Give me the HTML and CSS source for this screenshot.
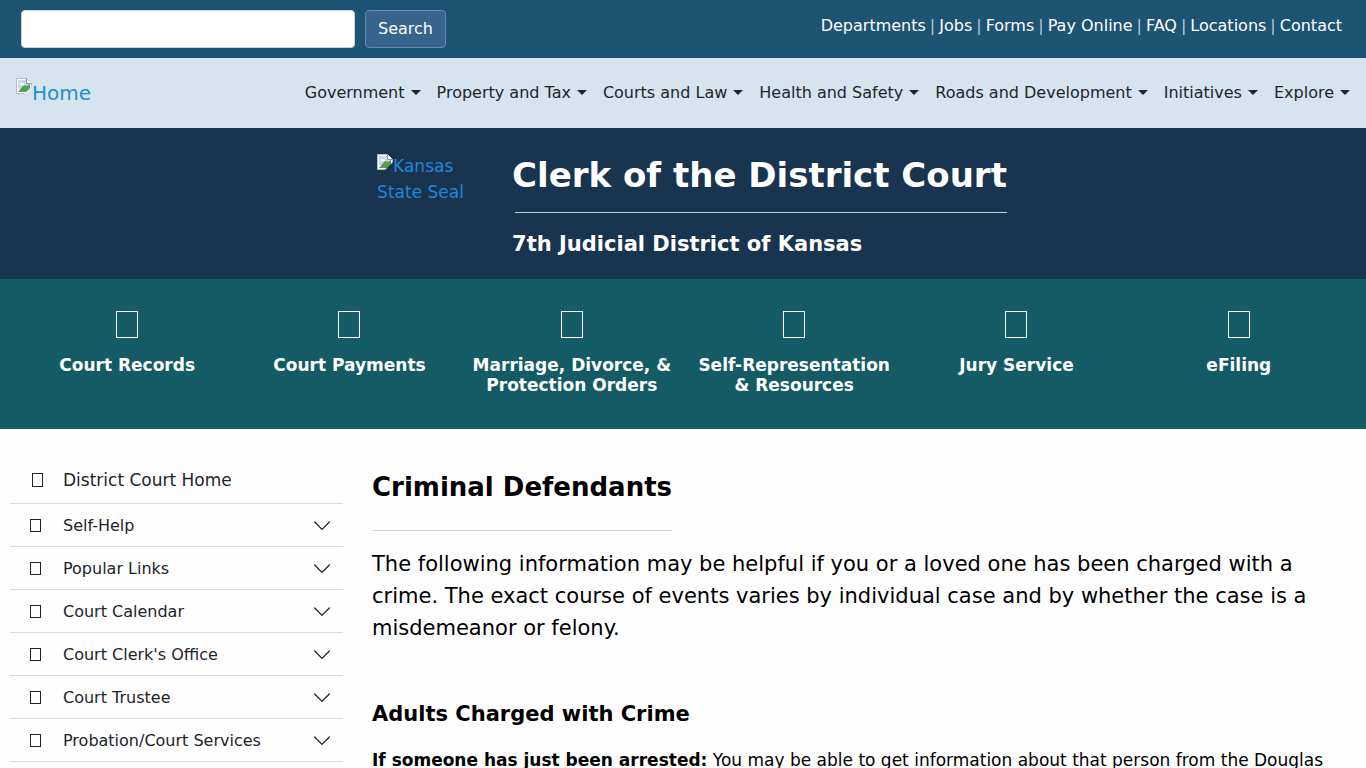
FILE: index.html
```
<!DOCTYPE html>
<html lang="en">
<head>
    <meta charset="UTF-8">
    <meta name="viewport" content="width=device-width, initial-scale=1.0">
    <title>Criminal Defendants</title>
    <link rel="stylesheet" href="styles.css">
</head>
<body>
    <svg class="defs" width="0" height="0" aria-hidden="true">
        <symbol id="missing" viewBox="0 0 16 16">
            <path d="M0.5 0.5h10l5 5v10h-15z" fill="#fff" stroke="#b9b9c4"/>
            <path d="M2 2h8v4h4v5H2z" fill="#c6d8f3"/>
            <path d="M2 14l4-5c2-2 4-2 5-1l3-2v8z" fill="#58a046"/>
            <path d="M4 7a2 1.500 0 0 1 4-1v1z" fill="#fff"/>
            <path d="M10.500 0.500v5h5" fill="#fff" stroke="#8c8c98"/>
            <path d="M16 8L8 16h8z" fill="currentColor"/>
        </symbol>
        <symbol id="chevron" viewBox="0 0 16 16">
            <path d="M1.500 4.500l6.500 6.500 6.500-6.500" fill="none" stroke="#212529" stroke-width="1.200" stroke-linecap="round" stroke-linejoin="round"/>
        </symbol>
    </svg>

    <div class="topbar">
        <form class="search">
            <input type="text" aria-label="Search">
            <button type="submit">Search</button>
        </form>
        <div class="top-links">
            <a href="#">Departments</a>
            <span>|</span>
            <a href="#">Jobs</a>
            <span>|</span>
            <a href="#">Forms</a>
            <span>|</span>
            <a href="#">Pay Online</a>
            <span>|</span>
            <a href="#">FAQ</a>
            <span>|</span>
            <a href="#">Locations</a>
            <span>|</span>
            <a href="#">Contact</a>
        </div>
    </div>

    <nav class="navbar">
        <a class="brand" href="#"><svg class="missing"><use href="#missing"/></svg>Home</a>
        <div class="menu">
            <a href="#">Government</a>
            <a href="#">Property and Tax</a>
            <a href="#">Courts and Law</a>
            <a href="#">Health and Safety</a>
            <a href="#">Roads and Development</a>
            <a href="#">Initiatives</a>
            <a href="#">Explore</a>
        </div>
    </nav>

    <header class="hero">
        <a class="seal" href="#"><svg class="missing"><use href="#missing"/></svg>Kansas State Seal</a>
        <div class="hero-text">
            <h1>Clerk of the District Court</h1>
            <hr>
            <p>7th Judicial District of Kansas</p>
        </div>
    </header>

    <div class="services">
        <a href="#"><span class="box"></span>Court Records</a>
        <a href="#"><span class="box"></span>Court Payments</a>
        <a href="#"><span class="box"></span>Marriage, Divorce, &amp; Protection Orders</a>
        <a href="#"><span class="box"></span>Self-Representation &amp; Resources</a>
        <a href="#"><span class="box"></span>Jury Service</a>
        <a href="#"><span class="box"></span>eFiling</a>
    </div>

    <div class="page">
        <aside class="sidebar">
            <a class="side-home" href="#"><span class="box"></span>District Court Home</a>
            <button type="button"><span class="box"></span>Self-Help<svg class="chevron"><use href="#chevron"/></svg></button>
            <button type="button"><span class="box"></span>Popular Links<svg class="chevron"><use href="#chevron"/></svg></button>
            <button type="button"><span class="box"></span>Court Calendar<svg class="chevron"><use href="#chevron"/></svg></button>
            <button type="button"><span class="box"></span>Court Clerk's Office<svg class="chevron"><use href="#chevron"/></svg></button>
            <button type="button"><span class="box"></span>Court Trustee<svg class="chevron"><use href="#chevron"/></svg></button>
            <button type="button"><span class="box"></span>Probation/Court Services<svg class="chevron"><use href="#chevron"/></svg></button>
        </aside>
        <main class="content">
            <h2>Criminal Defendants</h2>
            <hr>
            <p class="lead">The following information may be helpful if you or a loved one has been charged with a crime. The exact course of events varies by individual case and by whether the case is a misdemeanor or felony.</p>
            <h3>Adults Charged with Crime</h3>
            <p><strong>If someone has just been arrested:</strong> You may be able to get information about that person from the Douglas</p>
        </main>
    </div>
</body>
</html>
```
FILE: styles.css
```
*{
    box-sizing: border-box;
}
body{
    margin: 0;
    font-family: "DejaVu Sans", Verdana, sans-serif;
    font-size: 16px;
    line-height: 24px;
    color: #000;
    background-color: #fefefe;
}
a{
    text-decoration: none;
}
.defs{
    position: absolute;
}
.missing{
    width: 16px;
    height: 16px;
}
.box{
    flex: none;
    border: 1px solid currentColor;
}

/* top bar */
.topbar{
    display: flex;
    justify-content: space-between;
    align-items: flex-start;
    padding: 10px 24px 10px 21px;
    background-color: #1d5373;
}
.search{
    display: flex;
    gap: 10px;
}
.search input{
    width: 334px;
    height: 38px;
    padding: 6px 12px;
    font: inherit;
    border: 1px solid #ced4da;
    border-radius: 4px;
    background-color: #fff;
}
.search button{
    height: 38px;
    padding: 0 12px;
    font: inherit;
    color: #fff;
    border: 1px solid #5b8db5;
    border-radius: 4px;
    background-color: #37648d;
}
.top-links{
    display: flex;
    gap: 4px;
    padding-top: 4px;
    color: #b5cbd8;
}
.top-links a{
    color: #fff;
}

/* main menu */
.navbar{
    display: flex;
    justify-content: space-between;
    align-items: center;
    height: 70px;
    padding: 0 16px;
    background-color: #d5e4ee;
}
.brand{
    display: flex;
    align-items: flex-start;
    color: #1f8fc9;
    font-size: 20px;
    line-height: 30px;
}
.brand .missing{
    color: #d5e4ee;
}
.menu{
    display: flex;
    gap: 16px;
}
.menu a{
    color: #212529;
}
.menu a::after{
    content: "";
    display: inline-block;
    margin-left: 6px;
    vertical-align: 3px;
    border-top: 5px solid;
    border-left: 5px solid transparent;
    border-right: 5px solid transparent;
}

/* department banner */
.hero{
    display: flex;
    justify-content: center;
    gap: 37px;
    padding: 25px 0 22px 18px;
    background-color: #18344f;
}
.seal{
    width: 98px;
    font-size: 17px;
    line-height: 26px;
    color: #1f86d6;
}
.seal .missing{
    vertical-align: 2px;
    color: #18344f;
}
.hero-text{
    color: #fff;
}
.hero h1{
    margin: 0;
    font-size: 34px;
    line-height: 44px;
}
.hero hr{
    margin: 15px 0 18px 3px;
    border: 0;
    border-top: 1px solid #b5d3e5;
}
.hero p{
    margin: 0;
    font-size: 21px;
    line-height: 26px;
    font-weight: bold;
}

/* service shortcuts */
.services{
    display: grid;
    grid-template-columns: repeat(6, 1fr);
    min-height: 150px;
    padding: 32px 16px;
    background-color: #145b66;
}
.services a{
    display: flex;
    flex-direction: column;
    align-items: center;
    gap: 17px;
    padding: 0 8px;
    font-size: 17px;
    line-height: 20px;
    font-weight: bold;
    text-align: center;
    color: #fff;
}
.services .box{
    width: 22px;
    height: 27px;
}

/* page */
.page{
    display: flex;
    gap: 29px;
    padding: 28px 24px 0 10px;
}
.sidebar{
    flex: 0 0 333px;
}
.sidebar a,
.sidebar button{
    display: flex;
    align-items: center;
    width: 100%;
    height: 43px;
    padding: 1px 12px 0 20px;
    font: inherit;
    text-align: left;
    color: #212529;
    border: 0;
    border-bottom: 1px solid #d9dcdf;
    background: none;
}
.sidebar .side-home{
    height: 47px;
    padding: 0 12px 0 22px;
    font-size: 17px;
}
.sidebar .box{
    width: 11px;
    height: 13px;
    margin-right: 22px;
}
.sidebar .side-home .box{
    height: 14px;
    margin-right: 20px;
}
.chevron{
    width: 18px;
    height: 18px;
    margin-left: auto;
}
.content{
    flex: 1;
    min-width: 0;
}
.content h2{
    margin: 14px 0 27px;
    font-size: 26px;
    line-height: 32px;
}
.content hr{
    width: 300px;
    margin: 0 0 17px;
    border: 0;
    border-top: 1px solid #d3d3d3;
}
.content p{
    margin: 0;
    font-size: 17px;
    line-height: 26px;
}
.content .lead{
    font-size: 21px;
    line-height: 32px;
}
.content h3{
    margin: 55px 0 18px;
    font-size: 21px;
    line-height: 30px;
}
```
